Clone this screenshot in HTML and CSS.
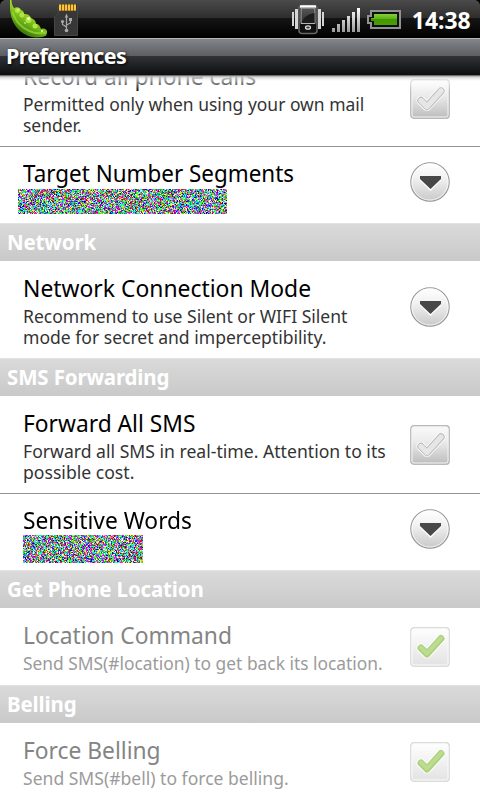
FILE: index.html
```html
<!DOCTYPE html>
<html lang="en">
<head>
<meta charset="utf-8">
<title>Preferences</title>
<link rel="stylesheet" href="styles.css">
</head>
<body>
<svg width="0" height="0" class="defs">
  <defs>
    <linearGradient id="box" x1="0" y1="0" x2="0" y2="1"><stop offset="0" stop-color="#fafafa"/><stop offset=".4" stop-color="#ececec"/><stop offset="1" stop-color="#bcbcbc"/></linearGradient>
    <linearGradient id="boxOn" x1="0" y1="0" x2="0" y2="1"><stop offset="0" stop-color="#fff"/><stop offset="1" stop-color="#e2e2e2"/></linearGradient>
    <linearGradient id="disc" x1="0" y1="0" x2="0" y2="1"><stop offset="0" stop-color="#fff"/><stop offset=".4" stop-color="#f1f1f1"/><stop offset="1" stop-color="#c8c8c8"/></linearGradient>
    <symbol id="off" viewBox="0 0 40 40">
      <rect x=".8" y=".8" width="38.4" height="38.4" rx="3" fill="url(#box)" stroke="#b9b9b9" stroke-width="1.4"/>
      <rect x="2" y="2" width="36" height="36" rx="2" fill="none" stroke="#f4f4f4"/>
      <path d="M11 21.500l6 6L31 12" fill="none" stroke="#fff" stroke-width="9" stroke-linecap="round" stroke-linejoin="round"/>
      <path d="M11 21.500l6 6L31 12" fill="none" stroke="#bcbcbc" stroke-width="7.400" stroke-linecap="round" stroke-linejoin="round"/>
      <path d="M11 21.500l6 6L31 12" fill="none" stroke="#e6e6e6" stroke-width="5.400" stroke-linecap="round" stroke-linejoin="round"/>
    </symbol>
    <symbol id="on" viewBox="0 0 40 40">
      <rect x=".8" y=".8" width="38.4" height="38.4" rx="3" fill="url(#boxOn)" stroke="#d9dcd9" stroke-width="1.4"/>
      <rect x="2" y="2" width="36" height="36" rx="2" fill="none" stroke="#fafafa"/>
      <path d="M11 21l6 6L31 11.500" fill="none" stroke="#fff" stroke-width="9" stroke-linecap="round" stroke-linejoin="round"/>
      <path d="M11 21l6 6L31 11.500" fill="none" stroke="#aed17f" stroke-width="7" stroke-linecap="round" stroke-linejoin="round"/>
      <path d="M11 20.500l6 6L31 11" fill="none" stroke="#bbdc91" stroke-width="4" stroke-linecap="round" stroke-linejoin="round"/>
    </symbol>
    <symbol id="more" viewBox="0 0 40 40">
      <circle cx="20" cy="20" r="19.200" fill="url(#disc)" stroke="#969696" stroke-width="1.100"/>
      <circle cx="20" cy="20" r="18" fill="none" stroke="#fff" stroke-opacity=".7"/>
      <path d="M10 17.500l10.500 10.500L31 17.500" fill="none" stroke="#fff" stroke-width="1.500"/>
      <path d="M10 14h21v3L20.500 27 10 17z" fill="#484848"/>
    </symbol>
  </defs>
</svg>
<div class="screen">
  <header class="status">
    <svg class="pea" width="50" height="38" viewBox="0 0 50 38">
      <defs><linearGradient id="pod" gradientUnits="userSpaceOnUse" x1="32" y1="14" x2="21" y2="33"><stop offset="0" stop-color="#a4dc25"/><stop offset=".5" stop-color="#6db317"/><stop offset="1" stop-color="#33700a"/></linearGradient></defs>
      <path d="M10 0h1.500c0 3 .5 5 2.500 8 3-1.500 6-1 7 2 2 .5 3 2 3 4 3-.5 6 1 7 4 3 1 5 3 5 6 3 0 4 2 5 5 3-1 5 0 6 2 .500 3-1 5-3 5.500-8 2.500-18 .5-25-6.500C13 24 10.500 17 10 8.500z" fill="url(#pod)"/>
      <path d="M12.500 12c3 10 10 17 21 20.500 4 1 8 1 12 0" fill="none" stroke="#a0dc38" stroke-width="2" opacity=".7"/>
      <g fill="#b0e545"><circle cx="17.500" cy="10.500" r="2.500"/><circle cx="22" cy="15" r="2.500"/><circle cx="28.500" cy="20" r="3"/><circle cx="35" cy="26" r="2.500"/></g>
      <g fill="#f1ffc3"><circle cx="18" cy="10" r=".8"/><circle cx="28.500" cy="18.500" r="1.500"/><circle cx="25" cy="23" r=".8"/><circle cx="42" cy="31" r="1"/></g>
    </svg>
    <svg class="card" width="26" height="34" viewBox="0 0 26 34">
      <path d="M6 .5h18.500v32H1.500V14L5 10.500V.5z" fill="#373737" stroke="#464646"/>
      <path d="M6 1.500h17v6.500H6z" fill="#8b5a10"/>
      <path d="M6 1.500h2v6H6zM9 1.500h2v6H9zM12 1.500h2v6h-2zM15 1.500h2v6h-2zM18 1.500h2v6h-2zM21 1.500h2v6h-2z" fill="#fac73a"/>
      <path d="M13.500 28V14M13.500 24l-4-2.500V19M13.500 22l4-2v-3" fill="none" stroke="#aaa" stroke-width="1.200"/>
      <path d="M11.800 14.500h3.400l-1.700-4zM16 15h3v3h-3z" fill="#aaa"/><circle cx="9.500" cy="18.500" r="1.600" fill="#aaa"/><circle cx="13.500" cy="27.500" r="1.800" fill="#aaa"/>
    </svg>
    <span class="spacer"></span>
    <svg width="188" height="38" viewBox="292 0 188 38" class="tray">
      <defs>
        <linearGradient id="bars" gradientUnits="userSpaceOnUse" x1="0" y1="8" x2="0" y2="32"><stop offset="0" stop-color="#fff"/><stop offset="1" stop-color="#999"/></linearGradient>
        <linearGradient id="cell" x1="0" y1="0" x2="0" y2="1"><stop offset="0" stop-color="#86cf3b"/><stop offset=".48" stop-color="#5aaf10"/><stop offset=".5" stop-color="#439700"/><stop offset="1" stop-color="#4b9e03"/></linearGradient>
        <linearGradient id="glass" x1="0" y1="0" x2="0" y2="1"><stop offset="0" stop-color="#555"/><stop offset="1" stop-color="#303030"/></linearGradient>
      </defs>
      <path d="M292 12h2v14h-2zM295 9h3v20h-3zM318 9h3v20h-3zM322 12h2v14h-2z" fill="#d4d4d4"/>
      <rect x="299" y="5.500" width="18" height="28" rx="3" fill="#111" stroke="#666" stroke-width="1.500"/>
      <path d="M300 6.500h16" stroke="#fff" stroke-width="2.500"/>
      <path d="M301 8v15.500h14V8z" fill="url(#glass)" stroke="#b4b4b4"/>
      <path d="M302 22c2-5 6-8 12.500-9v10H302z" fill="#1c1c1c"/>
      <ellipse cx="308" cy="27.500" rx="2.500" ry="1.700" fill="#333" stroke="#e2e2e2" stroke-width="1.200"/>
      <path d="M332 28h3v4h-3zM337 24h3v8h-3zM342 20h3v12h-3zM347 16h3v16h-3zM352 12h3v20h-3zM357 8h3v24h-3z" fill="url(#bars)"/>
      <path d="M371 11h29v17h-29v-5h-3v-7h3z" fill="#101010" stroke="#929292" stroke-width="2"/>
      <path d="M374 14h23v11h-23v-4h-3v-3h3z" fill="url(#cell)"/>
    </svg>
    <span class="clock">14:38</span>
    <i class="corner left"></i><i class="corner right"></i>
  </header>
  <h1 class="bar">Preferences</h1>
  <main class="viewport">
    <div class="list">
      <section class="row tall ruled"><div class="text"><h2 class="n953">Record all phone calls</h2><p class="n970">Permitted only when using your own mail<br>sender.</p></div><svg class="ctl"><use href="#off"/></svg></section>
      <section class="row low"><div class="text"><h2 class="n934">Target Number Segments</h2><canvas class="noise segments" width="209" height="25"></canvas></div><svg class="ctl arrow"><use href="#more"/></svg></section>
      <h3>Network</h3>
      <section class="row tall"><div class="text"><h2 class="n953">Network Connection Mode</h2><p class="n975">Recommend to use Silent or WIFI Silent<br>mode for secret and imperceptibility.</p></div><svg class="ctl arrow"><use href="#more"/></svg></section>
      <h3>SMS Forwarding</h3>
      <section class="row tall ruled extra"><div class="text"><h2 class="n949">Forward All SMS</h2><p class="n978">Forward all SMS in real-time. Attention to its<br>possible cost.</p></div><svg class="ctl"><use href="#off"/></svg></section>
      <section class="row low"><div class="text"><h2 class="n949">Sensitive Words</h2><canvas class="noise words" width="120" height="28"></canvas></div><svg class="ctl arrow"><use href="#more"/></svg></section>
      <h3>Get Phone Location</h3>
      <section class="row disabled"><div class="text"><h2 class="n949">Location Command</h2><p class="n965">Send SMS(#location) to get back its location.</p></div><svg class="ctl"><use href="#on"/></svg></section>
      <h3>Belling</h3>
      <section class="row disabled"><div class="text"><h2 class="n949">Force Belling</h2><p class="n975">Send SMS(#bell) to force belling.</p></div><svg class="ctl"><use href="#on"/></svg></section>
    </div>
    <div class="fade"></div>
  </main>
</div>
<script src="noise.js"></script>
</body>
</html>
```
FILE: styles.css
```css
* { box-sizing: border-box; }
body { margin: 0; background: #fff; font-family: "Noto Sans", "Open Sans", sans-serif; }
h1, h2, h3, p { margin: 0; font-weight: 400; white-space: nowrap; }
.defs { position: absolute; }
.screen { width: 480px; height: 800px; overflow: hidden; display: flex; flex-direction: column; }
.status { position: relative; flex: 0 0 38px; display: flex; background: linear-gradient(#4b4b4b 0, #2d2d2d 18px, #151515 18px, #000 38px); }
.card { margin: 3px 0 0 3px; }
.spacer { flex: 1; }
.clock { position: absolute; right: 9px; top: 3px; font-size: 24px; line-height: 33px; font-weight: 700; color: #fff; transform: scaleX(.955); transform-origin: right; }
.corner { position: absolute; top: 0; width: 5px; height: 5px; }
.left { left: 0; background: radial-gradient(circle at 5px 5px, transparent 4.5px, #000 5px); }
.right { right: 0; background: radial-gradient(circle at 0 5px, transparent 4.5px, #000 5px); }
.bar { flex: 0 0 38px; padding-left: 6px; border-top: 1px solid #b5b6b8; border-bottom: 1px solid #6d6b6d; background: linear-gradient(#82858a 0, #5c5e61 17px, #313336 17px, #0d0e10 36px); color: #fff; font-size: 21.5px; line-height: 34px; font-weight: 700; letter-spacing: -.65px; text-shadow: 1px 1px 3px #000; }
.viewport { position: relative; flex: 1; overflow: hidden; }
.list { margin-top: -26px; }
.fade { position: absolute; inset: 0 0 auto; height: 16px; background: linear-gradient(#aaa 0, rgba(225,225,225,.8) 2px, rgba(255,255,255,.6) 5px, rgba(255,255,255,0) 16px); }
.row { height: 77px; padding: 0 30px 0 23px; display: flex; justify-content: space-between; }
.low { height: 76px; }
.tall { height: 97px; }
.extra { height: 98px; }
.ruled { border-bottom: 1px solid #949494; }
.text { width: 370px; padding-top: 9px; }
h3 + .row .text { padding-top: 10px; }
h2 { font-size: 24px; line-height: 33px; color: #000; }
h2, p { width: max-content; transform-origin: 0 0; }
p { padding-top: 1px; font-size: 18px; line-height: 21px; color: #333; }
.tall p, .disabled p { padding-top: 2px; }
.n934 { transform: scaleX(.934); }
.n949 { transform: scaleX(.949); }
.n953 { transform: scaleX(.953); }
.n965 { transform: scaleX(.965); }
.n970 { transform: scaleX(.97); }
.n975 { transform: scaleX(.975); }
.n978 { transform: scaleX(.978); }
.disabled h2 { color: #848484; }
.disabled p { color: #9b9b9b; }
.ctl { flex: 0 0 40px; height: 40px; margin-top: 19px; }
.tall .ctl { margin-top: 29px; }
.row .arrow { margin-top: 15px; }
.tall .arrow { margin-top: 26px; }
.noise { display: block; image-rendering: pixelated; }
.segments { margin-left: -5px; }
.words { margin-top: -1px; }
h3 { height: 38px; padding-left: 7px; border-top: 1px solid #e2e2e2; background: linear-gradient(#dadada, #c9c9c9); color: #fff; font-size: 20.5px; line-height: 37px; font-weight: 700; letter-spacing: -.15px; }
```
FILE: noise.js
```js
// Fills the masked values with single-pixel saturated static.
let seed = 48271;
function next() {
  seed = (seed * 16807) % 2147483647;
  return seed / 2147483647;
}
const hues = [[1, 0, 1], [0, 1, 1], [1, 1, 0], [0, 1, 0], [1, 0, 0], [0, 0, 1], [1, 1, 1], [1, 0, 1], [0, 1, 1], [0, 1, 0]];
document.querySelectorAll(".noise").forEach(function (canvas) {
  const ctx = canvas.getContext("2d");
  const img = ctx.createImageData(canvas.width, canvas.height);
  for (let i = 0; i < img.data.length; i += 4) {
    const hue = hues[Math.floor(next() * hues.length)];
    for (let c = 0; c < 3; c++) {
      const drift = next() < 0.4 ? next() * 140 : 0;
      img.data[i + c] = hue[c] ? 255 - drift : drift;
    }
    img.data[i + 3] = 255;
  }
  ctx.putImageData(img, 0, 0);
});
```
